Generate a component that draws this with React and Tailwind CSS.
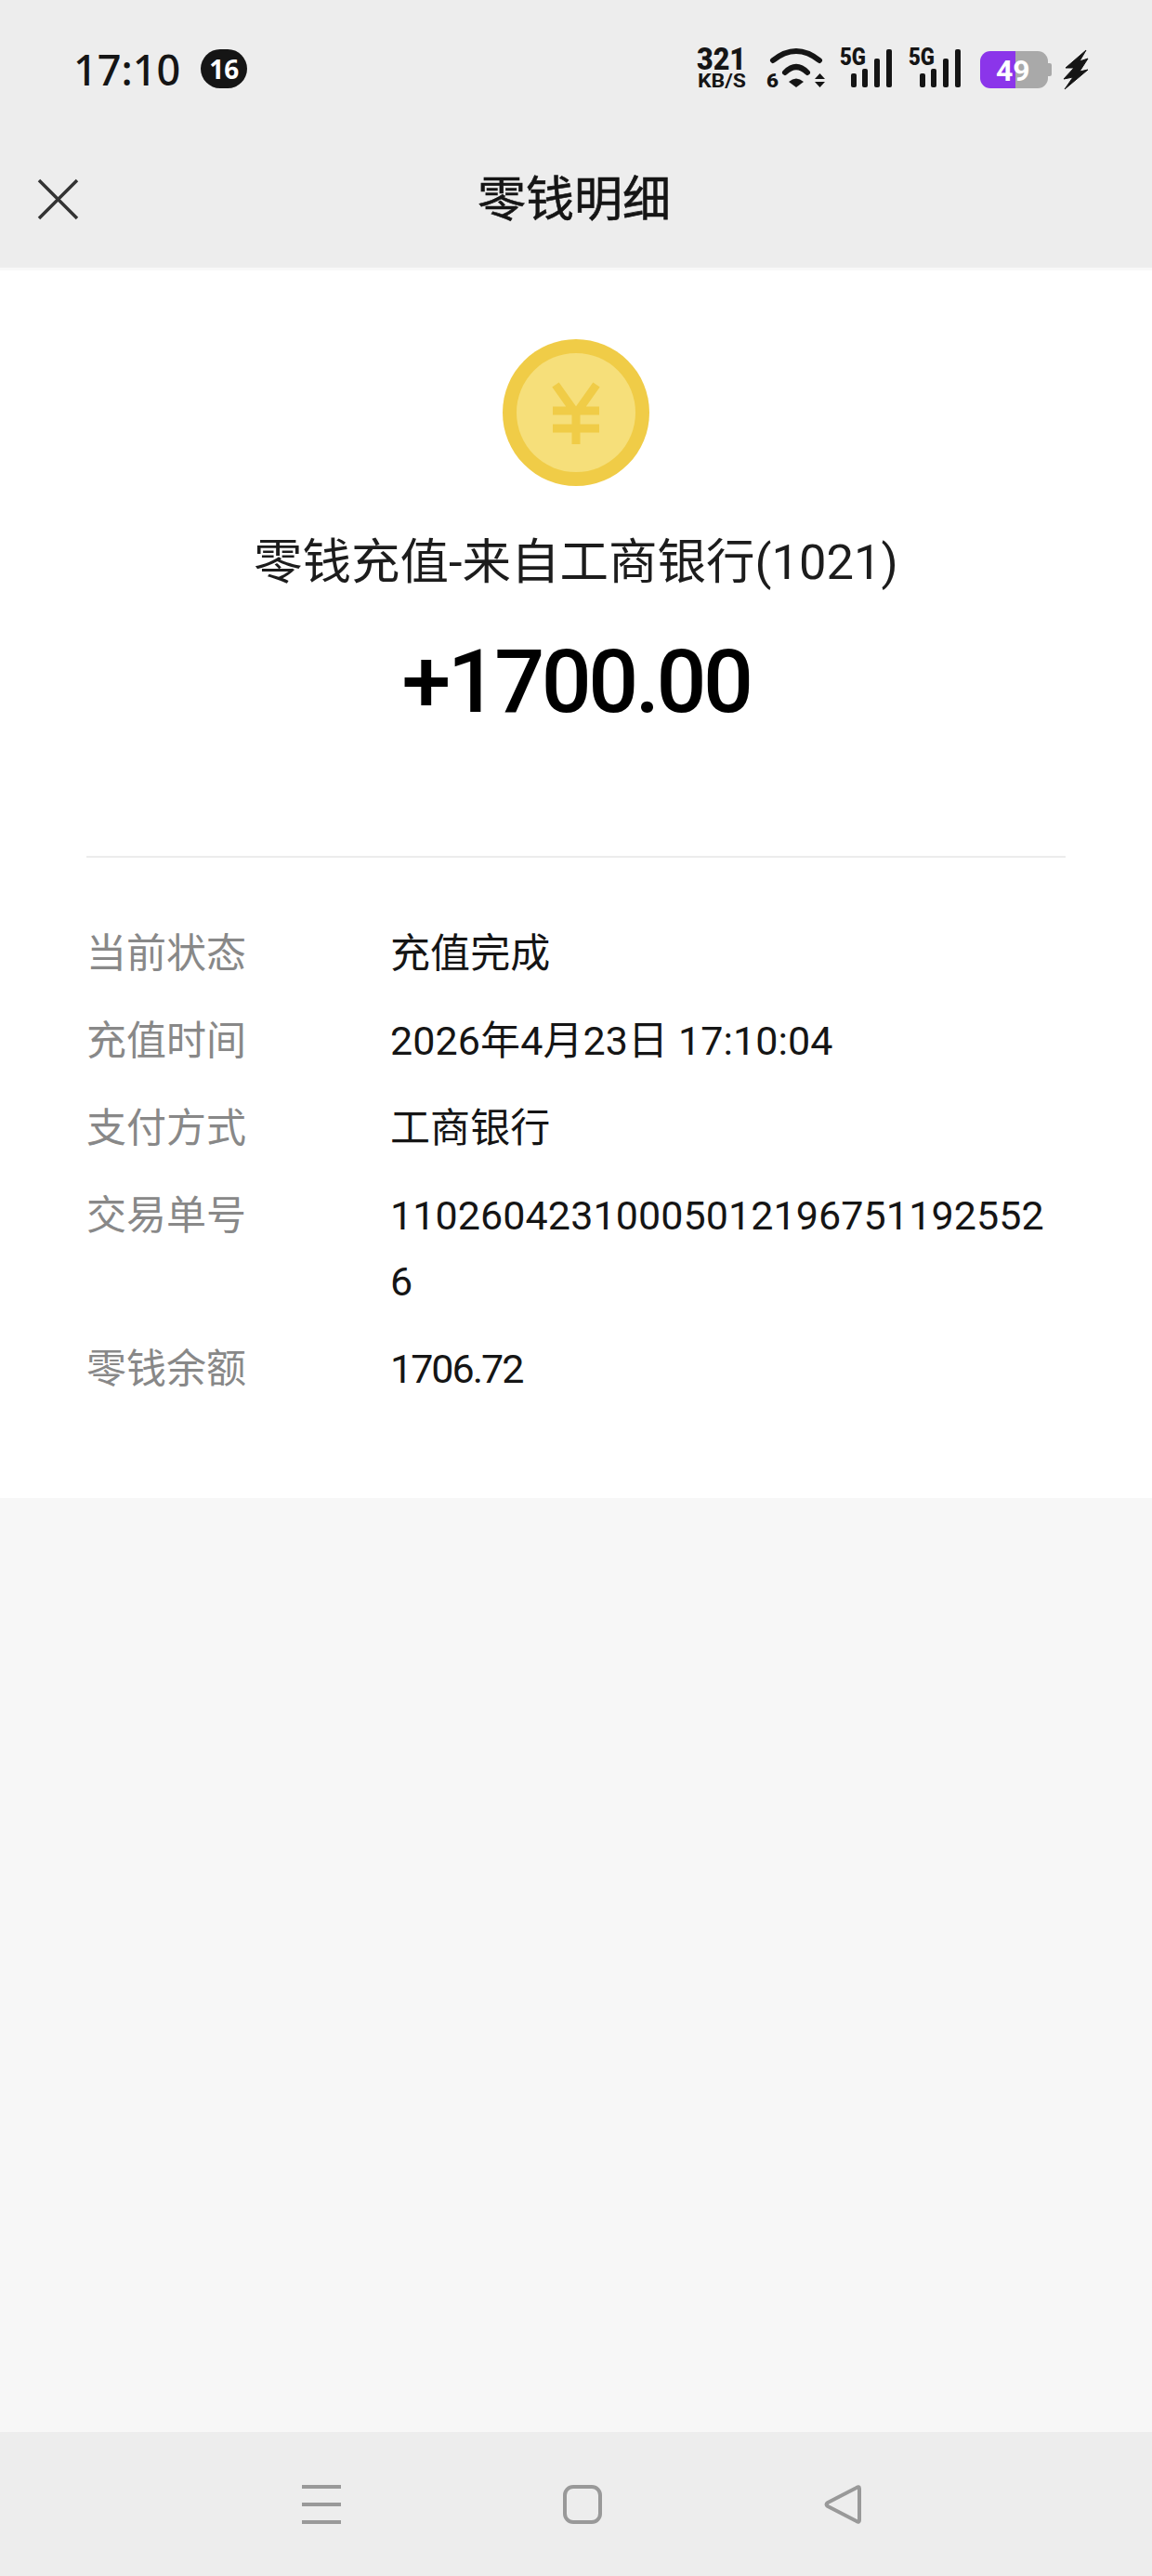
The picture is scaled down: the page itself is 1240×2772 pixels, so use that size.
import React from 'react';

const ROWS = [
  { label: '当前状态', value: '充值完成' },
  { label: '充值时间', value: '2026年4月23日 17:10:04' },
  { label: '支付方式', value: '工商银行' },
  { label: '交易单号', value: '110260423100050121967511925526' },
  { label: '零钱余额', value: '1706.72', tight: true },
];

function Signal({ dx = 0 }) {
  return (
    <g transform={`translate(${dx} 0)`}>
      <text x="904" y="70" fontSize="26" fontWeight="900" textLength="28" lengthAdjust="spacingAndGlyphs" fill="#151515">5G</text>
      <rect x="916" y="79" width="6" height="15" rx="2" fill="#151515" />
      <rect x="928" y="74" width="6" height="20" rx="2" fill="#151515" />
      <rect x="941" y="63" width="6" height="31" rx="2" fill="#151515" />
      <rect x="954" y="53" width="6" height="41" rx="2" fill="#151515" />
    </g>
  );
}

/* everything right of the clock, drawn in screen coordinates */
function StatusIcons() {
  return (
    <svg width="420" height="48" viewBox="752 50 420 48" className="font-['Roboto'] overflow-visible">
      <text x="750" y="75" fontSize="33" fontWeight="900" textLength="53" lengthAdjust="spacingAndGlyphs" fill="#151515">321</text>
      <text x="751" y="94" fontSize="20" fontWeight="700" textLength="52" lengthAdjust="spacingAndGlyphs" fill="#151515">KB/S</text>

      <path d="M832 65 Q857 45 882 65" fill="none" stroke="#151515" strokeWidth="6" strokeLinecap="round" />
      <path d="M845 78 Q857 66 869 78" fill="none" stroke="#151515" strokeWidth="6" strokeLinecap="round" />
      <path d="M849 88 Q857 81 865 88 L857 94 Z" fill="#151515" />
      <text x="825" y="94" fontSize="21" fontWeight="900" textLength="13" lengthAdjust="spacingAndGlyphs" fill="#151515">6</text>
      <path d="M877 85 L882.5 79 L888 85 Z M877 88 L888 88 L882.5 94 Z" fill="#151515" />

      <Signal />
      <Signal dx={74} />

      <clipPath id="battery-clip"><rect x="1055" y="55" width="73" height="40" rx="11" /></clipPath>
      <g clipPath="url(#battery-clip)">
        <rect x="1055" y="55" width="38" height="40" fill="#8b35ea" />
        <rect x="1093" y="55" width="35" height="40" fill="#a9a9a9" />
      </g>
      <rect x="1126" y="68" width="6" height="14" rx="2" fill="#a9a9a9" />
      <text x="1072" y="87" fontSize="32" fontWeight="700" fill="#fff">49</text>

      <path d="M1169 54 L1147 73 L1156 73 L1145 85 L1155 83 L1146 96 L1171 75 L1162 77 L1171 63 L1162 66 Z" fill="#151515" stroke="#151515" strokeWidth="1" strokeLinejoin="round" />
    </svg>
  );
}

function Coin() {
  return (
    <svg width="158" height="158" viewBox="0 0 158 158">
      <circle cx="79" cy="79" r="79" fill="#f0cc47" />
      <circle cx="79" cy="79" r="64" fill="#f6df7a" />
      <path d="M57 49 L79 80 L101 49 M79 78 L79 113 M54 77 L104 77 M54 96 L104 96" fill="none" stroke="#f0cc47" strokeWidth="9" />
    </svg>
  );
}

function NavIcons() {
  return (
    <>
      <svg width="42" height="42" viewBox="0 0 42 42">
        <path d="M0 2 H42 M0 21 H42 M0 40 H42" stroke="#999" strokeWidth="4" />
      </svg>
      <svg width="42" height="42" viewBox="0 0 42 42">
        <rect x="2" y="2" width="38" height="38" rx="9" fill="none" stroke="#999" strokeWidth="4" />
      </svg>
      <svg width="42" height="42" viewBox="0 0 42 42">
        <path d="M38 4 Q38 1 35 3 L4 19 Q1 21 4 23 L35 39 Q38 41 38 38 Z" fill="none" stroke="#999" strokeWidth="4" strokeLinejoin="round" />
      </svg>
    </>
  );
}

export default function App() {
  return (
    <div className="flex flex-col h-[2772px] w-[1240px] bg-[#f7f7f7] font-['Roboto','Noto_Sans_CJK_SC',sans-serif] text-[#151515]">
      {/* status bar + title bar */}
      <header className="bg-[#ededed] h-[291px] shrink-0 border-b-[3px] border-[#f8f8f8]">
        <div className="flex items-center h-[148px] pl-[79px] pr-[68px]">
          <span className="font-['Noto_Sans'] text-[45px] font-medium leading-none">17:10</span>
          <span className="ml-[22px] w-[50px] h-[42px] rounded-full bg-[#151515] text-white flex items-center justify-center font-['Noto_Sans'] text-[28px] font-bold">16</span>
          <div className="ml-auto"><StatusIcons /></div>
        </div>
        <div className="relative flex items-center justify-center h-[136px] pr-[4px]">
          <svg className="absolute left-[40px] top-[44px]" width="45" height="45" viewBox="0 0 45 45">
            <path d="M2 2 L43 43 M43 2 L2 43" stroke="#333" strokeWidth="3.5" />
          </svg>
          <h1 className="text-[52px] font-normal leading-none [-webkit-text-stroke:0.6px_#151515]">零钱明细</h1>
        </div>
      </header>

      {/* detail card */}
      <main className="bg-white h-[1321px] shrink-0 px-[93px] pt-[74px]">
        <div className="flex flex-col items-center">
          <Coin />
          <p className="mt-[47px] text-[52.5px] leading-[70px] text-[#1c1c1c]">零钱充值-来自工商银行(1021)</p>
          <p className="mt-[38px] text-[95px] leading-[112px] font-medium text-black tracking-[-3.5px]">+1700.00</p>
        </div>
        <div className="mt-[131px] h-[2px] bg-[#ececec]" />
        <dl className="mt-[68px] flex flex-col gap-[23px]">
          {ROWS.map((r) => (
            <div key={r.label} className="flex text-[43px] leading-[71px]">
              <dt className="w-[327px] shrink-0 text-[#888888]">{r.label}</dt>
              <dd className={r.tight ? 'tracking-[-2px] min-w-0' : 'tracking-[0.1px] break-all min-w-0'}>{r.value}</dd>
            </div>
          ))}
        </dl>
      </main>

      <div className="flex-1" />

      {/* android nav bar */}
      <nav className="bg-[#ededed] h-[155px] shrink-0 flex items-center pl-[325px] pr-[311px] justify-between">
        <NavIcons />
      </nav>
    </div>
  );
}
